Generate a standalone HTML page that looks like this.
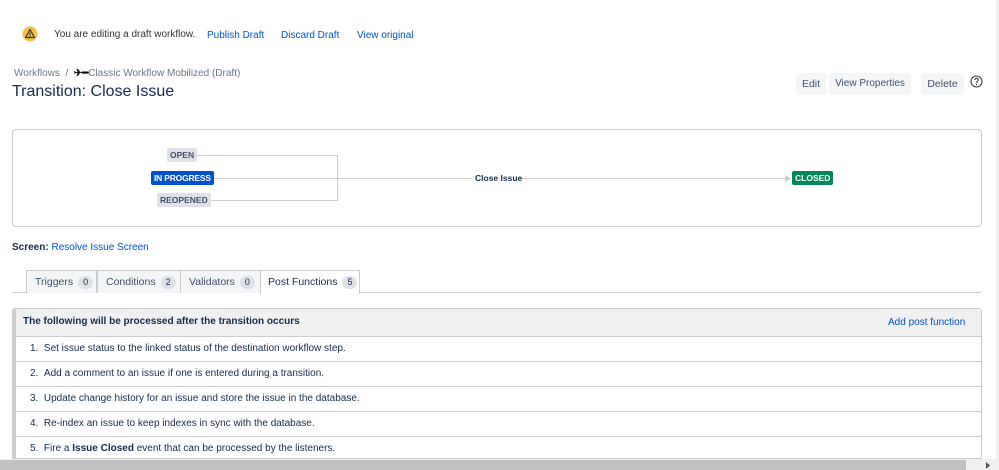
<!DOCTYPE html>
<html><head><meta charset="utf-8"><style>
*{box-sizing:border-box;margin:0;padding:0}
body{width:999px;height:470px;overflow:hidden;background:#fff;font-family:"Liberation Sans",sans-serif;font-size:10.5px;color:#172b4d;position:relative}
.a{position:absolute;white-space:nowrap}
.link{color:#0052cc}
.btn{position:absolute;top:73px;height:22px;background:#f4f5f7;border-radius:3px;color:#42526e;font-size:10.5px;line-height:22px;text-align:center}
.lz{position:absolute;font-size:8.5px;font-weight:bold;height:14px;line-height:14px;border-radius:2px;padding:0 3px;white-space:nowrap}
.tab{position:absolute;top:270px;height:23px;border:1px solid #ccc;border-bottom:none;background:#f4f5f7;color:#42526e;line-height:22px;padding-left:8px;font-size:10.5px;white-space:nowrap}
.cnt{display:inline-block;background:#dfe1e6;border-radius:8px;padding:0 5px;font-size:9px;line-height:13px;margin-left:5px;color:#172b4d}
.row{position:absolute;left:15px;width:966px;height:25px;border-top:1px solid #ccc;line-height:24px;padding-left:15px;font-size:10px;white-space:nowrap}
</style></head><body>
<svg class="a" style="left:22px;top:26px" width="16" height="16" viewBox="0 0 16 16"><circle cx="8" cy="8" r="7.5" fill="#f5c242"/><path d="M8 3.5L12.5 11.5H3.5Z" fill="none" stroke="#333" stroke-width="1.2" stroke-linejoin="round"/><rect x="7.4" y="6.5" width="1.2" height="2.8" fill="#333"/><rect x="7.4" y="9.8" width="1.2" height="1" fill="#333"/></svg>
<div class="a" style="left:54px;top:29px;color:#333;font-size:10px">You are editing a draft workflow.</div>
<div class="a link" style="left:207px;top:30px;font-size:10px">Publish Draft</div>
<div class="a link" style="left:281px;top:30px;font-size:10px">Discard Draft</div>
<div class="a link" style="left:357px;top:30px;font-size:10px">View original</div>
<div class="a" style="left:14px;top:68px;color:#6b778c;font-size:10px">Workflows &nbsp;/ &nbsp;<span style="color:#000;font-weight:bold">✈━</span>Classic Workflow Mobilized (Draft)</div>
<div class="a" style="left:12px;top:83px;font-size:16px;color:#172b4d">Transition: Close Issue</div>
<div class="btn" style="left:796px;width:30px">Edit</div>
<div class="btn" style="left:829px;width:82px;font-size:10px">View Properties</div>
<div class="btn" style="left:921px;width:43px">Delete</div>
<svg class="a" style="left:970px;top:75px" width="13" height="13" viewBox="0 0 13 13"><circle cx="6.5" cy="6.5" r="5.5" fill="none" stroke="#444" stroke-width="1.1"/><path d="M4.8 5a1.7 1.7 0 1 1 2.4 1.5c-.6.3-.7.6-.7 1.2" fill="none" stroke="#444" stroke-width="1.1"/><circle cx="6.5" cy="9.5" r=".7" fill="#444"/></svg>
<div class="a" style="left:12px;top:129px;width:970px;height:98px;border:1px solid #ccc;border-radius:4px"></div>
<svg class="a" style="left:0;top:0" width="999" height="240">
<g stroke="#ccc" stroke-width="1" fill="none">
<path d="M197 155.5H337.5V200.5H207"/><path d="M212 178.5H472"/><path d="M520 178.5H785"/>
</g>
<path d="M785 175L791 178.5L785 182Z" fill="#ccc"/>
</svg>
<div class="lz" style="left:167px;top:148px;background:#dfe1e6;color:#42526e">OPEN</div>
<div class="lz" style="left:151px;top:171px;background:#0052cc;color:#fff;letter-spacing:-0.2px">IN PROGRESS</div>
<div class="lz" style="left:157px;top:193px;background:#dfe1e6;color:#42526e">REOPENED</div>
<div class="a" style="left:475px;top:173px;font-size:8.5px;font-weight:bold;color:#172b4d">Close Issue</div>
<div class="lz" style="left:792px;top:171px;background:#00875a;color:#fff">CLOSED</div>
<div class="a" style="left:12px;top:242px;font-size:10px"><b>Screen:</b> <span class="link">Resolve Issue Screen</span></div>
<div class="a" style="left:12px;top:292px;width:969px;border-top:1px solid #ccc"></div>
<div class="tab" style="left:26px;width:71px">Triggers<span class="cnt">0</span></div>
<div class="tab" style="left:97px;width:84px">Conditions<span class="cnt">2</span></div>
<div class="tab" style="left:180px;width:81px">Validators<span class="cnt">0</span></div>
<div class="tab" style="left:260px;width:100px;background:#fff;height:24px;color:#172b4d;padding-left:7px">Post Functions<span class="cnt">5</span></div>
<div class="a" style="left:12px;top:308px;width:970px;height:151px;border:1px solid #ccc;border-left:4px solid #ccc;border-radius:3px 3px 0 0"></div>
<div class="a" style="left:16px;top:309px;width:965px;height:27px;background:#f0f0f0"></div>
<div class="a" style="left:23px;top:316px;font-weight:bold;font-size:10px">The following will be processed after the transition occurs</div>
<div class="a link" style="left:888px;top:317px;font-size:10px">Add post function</div>
<div class="row" style="top:336px">1. &nbsp;Set issue status to the linked status of the destination workflow step.</div>
<div class="row" style="top:361px">2. &nbsp;Add a comment to an issue if one is entered during a transition.</div>
<div class="row" style="top:386px">3. &nbsp;Update change history for an issue and store the issue in the database.</div>
<div class="row" style="top:411px">4. &nbsp;Re-index an issue to keep indexes in sync with the database.</div>
<div class="row" style="top:436px">5. &nbsp;Fire a <b>Issue Closed</b> event that can be processed by the listeners.</div>
<div class="a" style="left:0;top:459px;width:999px;height:11px;background:#f0f0f0"></div>
<div class="a" style="left:0;top:460px;width:966px;height:10px;background:#c1c1c1"></div>
<div class="a" style="left:996px;top:0;width:3px;height:459px;background:#f0f0f0"></div>
<svg class="a" style="left:984px;top:461px" width="8" height="9"><path d="M2 1L6 4.5L2 8Z" fill="#505050"/></svg>
</body></html>
